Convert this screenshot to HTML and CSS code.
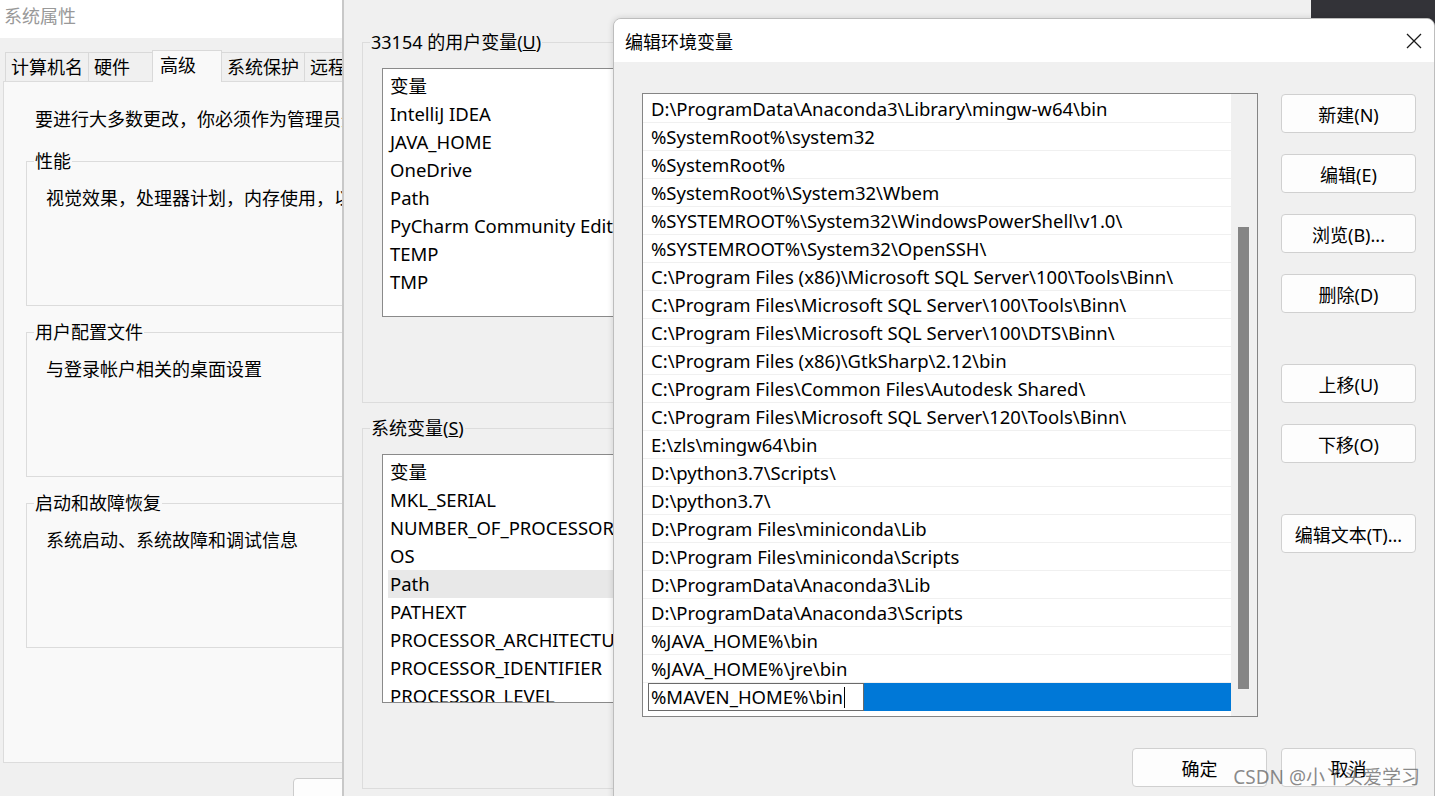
FILE: index.html
```html
<!DOCTYPE html>
<html lang="zh-CN">
<head>
  <meta charset="UTF-8" />
  <title>编辑环境变量</title>
  <link rel="stylesheet" href="styles.css">
</head>
<body>
  <div class="desktop">

    <!-- 系统属性 -->
    <section class="win win-sys">
      <div class="sys-title">系统属性</div>
      <div class="tabs">
        <div class="tab">计算机名</div>
        <div class="tab">硬件</div>
        <div class="tab active">高级</div>
        <div class="tab">系统保护</div>
        <div class="tab">远程</div>
      </div>
      <div class="tab-panel">
        <p class="note">要进行大多数更改，你必须作为管理员登录。</p>
        <div class="group sys-group">
          <div class="group-label">性能</div>
          <p class="group-text">视觉效果，处理器计划，内存使用，以及虚拟内存</p>
        </div>
        <div class="group sys-group">
          <div class="group-label">用户配置文件</div>
          <p class="group-text">与登录帐户相关的桌面设置</p>
        </div>
        <div class="group sys-group">
          <div class="group-label">启动和故障恢复</div>
          <p class="group-text">系统启动、系统故障和调试信息</p>
        </div>
      </div>
      <div class="sys-footer">
        <button class="btn">确定</button>
      </div>
    </section>

    <!-- 环境变量 -->
    <section class="win win-env">
      <div class="group env-group">
        <div class="group-label env-label">33154 的用户变量(<u>U</u>)</div>
        <div class="listbox">
          <div class="lb-row">变量</div>
          <div class="lb-row">IntelliJ IDEA</div>
          <div class="lb-row">JAVA_HOME</div>
          <div class="lb-row">OneDrive</div>
          <div class="lb-row">Path</div>
          <div class="lb-row">PyCharm Community Edition</div>
          <div class="lb-row">TEMP</div>
          <div class="lb-row">TMP</div>
        </div>
      </div>
      <div class="group env-group">
        <div class="group-label env-label">系统变量(<u>S</u>)</div>
        <div class="listbox">
          <div class="lb-row">变量</div>
          <div class="lb-row">MKL_SERIAL</div>
          <div class="lb-row">NUMBER_OF_PROCESSORS</div>
          <div class="lb-row">OS</div>
          <div class="lb-row selected">Path</div>
          <div class="lb-row">PATHEXT</div>
          <div class="lb-row">PROCESSOR_ARCHITECTURE</div>
          <div class="lb-row">PROCESSOR_IDENTIFIER</div>
          <div class="lb-row">PROCESSOR_LEVEL</div>
        </div>
      </div>
    </section>

    <!-- 编辑环境变量 -->
    <section class="win win-edit">
      <header class="edit-title">
        <span>编辑环境变量</span>
        <svg class="close-icon" width="16" height="16" viewBox="0 0 16 16">
          <path d="M1 1 L15 15 M15 1 L1 15" stroke="#1a1a1a" stroke-width="1.3" fill="none" />
        </svg>
      </header>
      <div class="edit-body">
        <div class="edit-main">
          <div class="path-list">
            <div class="path-rows">
              <div class="path-row">D:\ProgramData\Anaconda3\Library\mingw-w64\bin</div>
              <div class="path-row">%SystemRoot%\system32</div>
              <div class="path-row">%SystemRoot%</div>
              <div class="path-row">%SystemRoot%\System32\Wbem</div>
              <div class="path-row">%SYSTEMROOT%\System32\WindowsPowerShell\v1.0\</div>
              <div class="path-row">%SYSTEMROOT%\System32\OpenSSH\</div>
              <div class="path-row">C:\Program Files (x86)\Microsoft SQL Server\100\Tools\Binn\</div>
              <div class="path-row">C:\Program Files\Microsoft SQL Server\100\Tools\Binn\</div>
              <div class="path-row">C:\Program Files\Microsoft SQL Server\100\DTS\Binn\</div>
              <div class="path-row">C:\Program Files (x86)\GtkSharp\2.12\bin</div>
              <div class="path-row">C:\Program Files\Common Files\Autodesk Shared\</div>
              <div class="path-row">C:\Program Files\Microsoft SQL Server\120\Tools\Binn\</div>
              <div class="path-row">E:\zls\mingw64\bin</div>
              <div class="path-row">D:\python3.7\Scripts\</div>
              <div class="path-row">D:\python3.7\</div>
              <div class="path-row">D:\Program Files\miniconda\Lib</div>
              <div class="path-row">D:\Program Files\miniconda\Scripts</div>
              <div class="path-row">D:\ProgramData\Anaconda3\Lib</div>
              <div class="path-row">D:\ProgramData\Anaconda3\Scripts</div>
              <div class="path-row">%JAVA_HOME%\bin</div>
              <div class="path-row">%JAVA_HOME%\jre\bin</div>
              <div class="path-row editing">
                <span class="row-input">%MAVEN_HOME%\bin<span class="caret"></span></span>
                <span class="row-fill"></span>
              </div>
            </div>
            <div class="vscroll"><div class="thumb"></div></div>
          </div>

          <div class="side-btns">
            <button class="btn">新建(N)</button>
            <button class="btn">编辑(E)</button>
            <button class="btn">浏览(B)...</button>
            <button class="btn">删除(D)</button>
            <button class="btn spaced">上移(U)</button>
            <button class="btn">下移(O)</button>
            <button class="btn spaced">编辑文本(T)...</button>
          </div>
        </div>

        <div class="dlg-footer">
          <button class="btn">确定</button>
          <button class="btn">取消</button>
        </div>
      </div>
    </section>

    <div class="watermark">CSDN @小丫头爱学习</div>
  </div>
</body>
</html>
```

FILE: styles.css
```css
* {
  box-sizing: border-box;
  margin: 0;
  padding: 0;
}

body {
  font-family: 'Noto Sans', 'Noto Sans CJK SC', sans-serif;
  font-size: 18px;
  color: #000;
  background: #333338;
}

.desktop {
  position: relative;
  width: 1435px;
  height: 796px;
  overflow: hidden;
  background: #333338;
}

/* windows sit on the desktop at their own place */
.win {
  position: absolute;
  overflow: hidden;
  white-space: nowrap;
}

.btn {
  font-family: inherit;
  font-size: 18px;
  color: #000;
  background: #fdfdfd;
  border: 1px solid #d0d0d0;
  border-radius: 4px;
  width: 135px;
  height: 39px;
}

/* group boxes */
.group {
  border: 1px solid #dcdcdc;
}

.group-label {
  width: fit-content;
  margin: -13px 0 0 7px;
  padding: 0 1px;
  line-height: 24px;
}

/* ---- 系统属性 ---- */
.win-sys {
  left: 0;
  top: 0;
  width: 342px;
  height: 796px;
  background: #f0f0f0;
}

.sys-title {
  height: 38px;
  line-height: 32px;
  padding-left: 4px;
  background: #fff;
  color: #999;
}

.tabs {
  display: flex;
  align-items: flex-end;
  height: 43px;
  padding-left: 5px;
}

.tab {
  flex-shrink: 0;
  height: 29px;
  line-height: 28px;
  min-width: 65px;
  padding: 0 5px;
  border: 1px solid #d9d9d9;
  border-bottom: none;
  margin-right: -1px;
  background: #f0f0f0;
}

.tab.active {
  position: relative;
  z-index: 1;
  height: 32px;
  min-width: 70px;
  padding-left: 7px;
  line-height: 28px;
  background: #f9f9f9;
  margin-bottom: -1px;
}

.tab-panel {
  width: 420px;
  margin-left: 3px;
  height: 682px;
  background: #f9f9f9;
  border: 1px solid #dcdcdc;
  padding-top: 25px;
}

.note {
  line-height: 24px;
  padding-left: 31px;
}

.sys-group {
  height: 145px;
  margin: 26px 0 0 22px;
  background: #f9f9f9;
}

.sys-group:first-of-type {
  margin-top: 30px;
}

.sys-group .group-label {
  background: #f9f9f9;
}

.group-text {
  line-height: 24px;
  margin-top: 13px;
  padding-left: 19px;
}

.sys-footer {
  padding: 15px 0 0 293px;
}

.sys-footer .btn {
  height: 36px;
  border-color: #cccccc;
}

/* ---- 环境变量 ---- */
.win-env {
  left: 342px;
  top: 0;
  width: 969px;
  height: 796px;
  background: #f0f0f0;
  border-left: 2px solid #c8c8c8;
  padding: 42px 0 0 18px;
}

.env-group {
  width: 900px;
  height: 361px;
  margin-bottom: 25px;
}

.env-label {
  background: #f0f0f0;
}

.listbox {
  width: 820px;
  height: 249px;
  margin: 14px 0 0 19px;
  background: #fff;
  border: 1px solid #8a8a8a;
  padding: 3px 0 0 5px;
  overflow: hidden;
}

.lb-row {
  height: 28px;
  line-height: 28px;
  padding-left: 2px;
  font-size: 18.5px;
}

.lb-row.selected {
  background: #e8e8e8;
}

/* ---- 编辑环境变量 ---- */
.win-edit {
  left: 613px;
  top: 18px;
  width: 822px;
  height: 800px;
  background: #f0f0f0;
  border: 1px solid #bdbdbd;
  border-radius: 8px 8px 0 0;
  box-shadow: 0 0 6px rgba(0, 0, 0, 0.15);
}

.edit-title {
  display: flex;
  align-items: center;
  justify-content: space-between;
  height: 43px;
  padding: 0 12px 0 11px;
  background: #fff;
}

.edit-body {
  padding: 31px 18px 0 28px;
}

.edit-main {
  display: flex;
  align-items: flex-start;
}

.path-list {
  display: flex;
  width: 616px;
  height: 624px;
  border: 1px solid #858585;
  background: #fff;
  padding-top: 1px;
}

.path-rows {
  width: 588px;
}

.path-row {
  height: 28px;
  padding: 1px 0 0 8px;
  line-height: 26px;
  font-size: 18.5px;
  border-bottom: 1px solid #f0f0f0;
}

.path-row.editing {
  display: flex;
  padding: 0 0 0 5px;
  border-bottom: none;
}

.row-input {
  display: flex;
  align-items: center;
  height: 28px;
  padding: 0 18px 0 2px;
  background: #fff;
  border: 1px solid #6a6a6a;
}

.caret {
  display: inline-block;
  width: 1px;
  height: 21px;
  margin-left: 1px;
  background: #000;
}

.row-fill {
  flex: 1;
  background: #0078d7;
}

.vscroll {
  width: 26px;
  background: #f0f0f0;
  margin-top: -1px;
}

.thumb {
  width: 11px;
  height: 462px;
  margin: 133px 0 0 7px;
  background: #858585;
}

.side-btns {
  display: flex;
  flex-direction: column;
  gap: 21px;
  margin: 1px 0 0 23px;
}

.side-btns .spaced {
  margin-top: 30px;
}

.dlg-footer {
  display: flex;
  justify-content: flex-end;
  gap: 14px;
  margin-top: 31px;
}

.watermark {
  position: absolute;
  right: 15px;
  bottom: 8px;
  font-size: 19px;
  line-height: 22px;
  color: rgba(100, 100, 100, 0.75);
}
```
